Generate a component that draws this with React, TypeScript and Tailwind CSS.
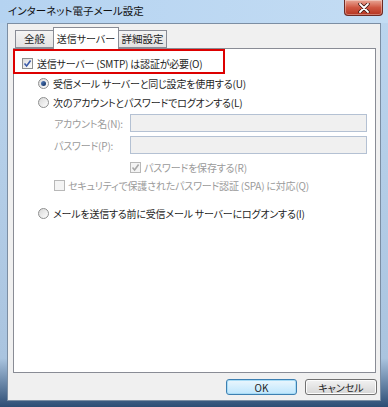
import React from "react";

const font = "font-['Noto_Sans_CJK_JP','Noto_Sans',sans-serif] [font-feature-settings:'palt']";

const Check = ({ checked, disabled }: { checked?: boolean; disabled?: boolean }) => (
  <span
    className={`flex size-[11px] shrink-0 items-center justify-center border ${
      disabled ? "border-[#b8b8b8] bg-[#f4f4f4]" : "border-[#8e8f8f] bg-gradient-to-br from-[#dcdcdc] to-white"
    }`}
  >
    {checked && (
      <svg width="9" height="9" viewBox="0 0 9 9">
        <path
          d="M1.5 4.5 L3.6 7 L7.6 1.5"
          fill="none"
          stroke={disabled ? "#a8a8a8" : "#3b5aa8"}
          strokeWidth="1.6"
        />
      </svg>
    )}
  </span>
);

const Radio = ({ selected }: { selected?: boolean }) => (
  <span className="flex size-[11px] shrink-0 items-center justify-center rounded-full border border-[#8e8f8f] bg-gradient-to-br from-[#d8d8d8] to-white">
    {selected && (
      <span className="size-[5px] rounded-full bg-gradient-to-br from-[#5b86c8] to-[#0d2a5a]" />
    )}
  </span>
);

const Tab = ({ label, active, w }: { label: string; active?: boolean; w: string }) =>
  active ? (
    <div className={`relative z-10 -mb-px flex h-[22px] items-center justify-center border border-b-0 border-[#898c95] bg-white text-[10px] text-[#1e1e1e] ${w}`}>
      {label}
    </div>
  ) : (
    <div className={`flex h-[18px] items-center justify-center border border-[#898c95] bg-gradient-to-b from-[#f4f4f4] to-[#e2e2e2] text-[10.5px] text-[#1e1e1e] first:border-r-0 last:border-l-0 ${w}`}>
      {label}
    </div>
  );

export default function App() {
  return (
    <div
      className={`flex h-[407px] w-[388px] flex-col bg-[linear-gradient(to_bottom,#bcd6ef_0%,#aac4df_88%,#2d4d74_100%)] px-[7px] pb-[6px] ${font}`}
    >
      <div className="-mx-[7px] flex h-[23px] items-start justify-between bg-gradient-to-r from-[#b5d3f1] to-[#c3dcf3] pl-[8px] pr-[5px]">
        <span className="mt-[3px] text-[10.5px] leading-[16px] text-[#111]">インターネット電子メール設定</span>
        <div className="flex h-[16px] w-[39px] items-center justify-center rounded-b-[4px] border border-t-0 border-[#6d2a23] bg-gradient-to-b from-[#e8a696] via-[#cf5742] to-[#b4331f] shadow-[inset_0_0_0_1px_rgba(255,255,255,0.35)]">
          <svg width="12" height="10" viewBox="0 0 12 10">
            <path d="M2 1 L10 9 M10 1 L2 9" stroke="#3a1410" strokeWidth="3.4" strokeLinecap="round" />
            <path d="M2 1 L10 9 M10 1 L2 9" stroke="#ffffff" strokeWidth="1.8" strokeLinecap="round" />
          </svg>
        </div>
      </div>

      <div className="flex flex-1 flex-col border border-[#7c8ea3] bg-[#f0f0f0]">
        <div className="flex items-end pl-[7px] pt-[3px]">
          <Tab label="全般" w="w-[38px]" />
          <Tab label="送信サーバー" active w="w-[66px]" />
          <Tab label="詳細設定" w="w-[48px]" />
        </div>

        <div className="relative ml-[5px] mr-[4px] flex h-[325px] flex-col whitespace-nowrap border border-[#898c95] bg-white text-[10px] tracking-[-0.2px] text-[#1e1e1e]">
          <div className="absolute left-[-1px] top-0 z-20 h-[25px] w-[212px] border-2 border-[#dd0000]" />

          <div className="ml-[8px] mt-[6px] flex h-[16px] items-center gap-[4px]">
            <Check checked />
            <span>送信サーバー (SMTP) は認証が必要(O)</span>
          </div>

          <div className="ml-[24px] mt-[4px] flex h-[16px] items-center gap-[4px]">
            <Radio selected />
            <span>受信メール サーバーと同じ設定を使用する(U)</span>
          </div>

          <div className="ml-[24px] mt-[3px] flex h-[16px] items-center gap-[4px]">
            <Radio />
            <span>次のアカウントとパスワードでログオンする(L)</span>
          </div>

          <div className="ml-[40px] mt-[4px] flex h-[18px] items-center">
            <span className="w-[76px] text-[#9a9a9a]">アカウント名(N):</span>
            <div className="h-[18px] w-[237px] border border-[#b4c1d3] bg-[#f0f0f0]" />
          </div>

          <div className="ml-[40px] mt-[4px] flex h-[18px] items-center">
            <span className="w-[76px] text-[#9a9a9a]">パスワード(P):</span>
            <div className="h-[18px] w-[237px] border border-[#b4c1d3] bg-[#f0f0f0]" />
          </div>

          <div className="ml-[116px] mt-[5px] flex h-[16px] items-center gap-[3px] text-[#9a9a9a]">
            <Check checked disabled />
            <span>パスワードを保存する(R)</span>
          </div>

          <div className="ml-[40px] mt-[2px] flex h-[16px] items-center gap-[3px] text-[#9a9a9a]">
            <Check disabled />
            <span>セキュリティで保護されたパスワード認証 (SPA) に対応(Q)</span>
          </div>

          <div className="ml-[24px] mt-[12px] flex h-[16px] items-center gap-[4px]">
            <Radio />
            <span>メールを送信する前に受信メール サーバーにログオンする(I)</span>
          </div>
        </div>

        <div className="mr-[3px] mt-[6px] flex justify-end gap-[8px] text-[10px] text-[#1e1e1e]">
          <button className="flex h-[16px] w-[71px] items-center justify-center rounded-[3px] border border-[#3c7fb1] bg-gradient-to-b from-[#eaf6fd] to-[#bee6fd] shadow-[inset_0_0_0_1px_#a8dcf6]">
            OK
          </button>
          <button className="flex h-[16px] w-[72px] items-center justify-center rounded-[3px] border border-[#707070] bg-gradient-to-b from-[#f2f2f2] to-[#d6d6d6] shadow-[inset_0_0_0_1px_#fcfcfc]">
            キャンセル
          </button>
        </div>
      </div>
    </div>
  );
}
